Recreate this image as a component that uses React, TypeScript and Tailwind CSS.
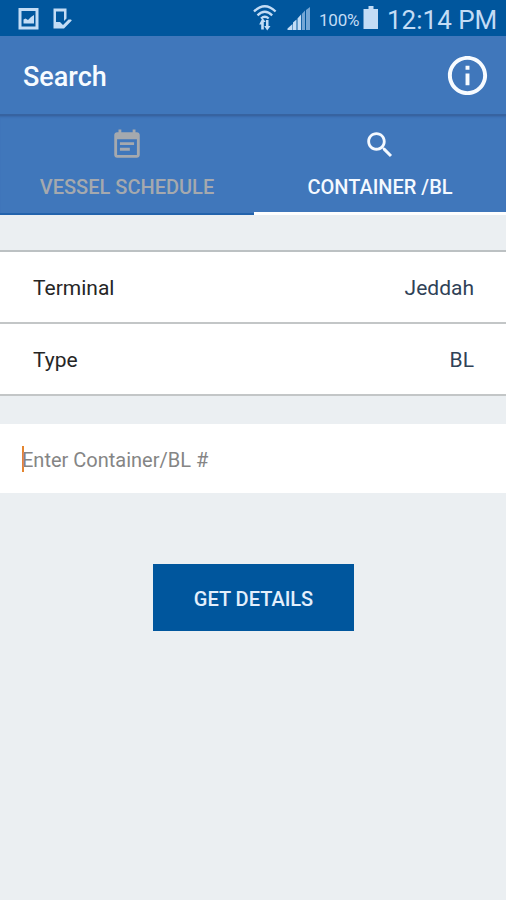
import type { ReactNode } from "react";

function StatusBar() {
  return (
    <div className="flex h-9 shrink-0 bg-[#00569d] text-[#c3dcf5]">
      <svg className="h-9 w-20" viewBox="0 0 80 36" fill="currentColor">
        <path fillRule="evenodd" d="M18.5 8h20v21.500h-20zM21.500 11v15.500h14V11zM23.500 23.500v-4l2-1 2.500 1.500 3-3 3-2v8.500z" />
        <path fillRule="evenodd" d="M53.500 8.500h13v10l-2.500 2.500v-9.500h-8V22h4l3 3 5.500-5.500 2.500 0 .8 1-7.800 8H53.500z" />
      </svg>
      <div className="grow" />
      <svg className="h-9 w-16" viewBox="0 0 64 36" fill="none">
        <g stroke="currentColor" strokeWidth="2.300">
          <path d="M5 11.500Q15.800 1 26.600 11.500" />
          <path d="M8.500 15.300Q15.800 8.300 23.200 15.300" />
          <path d="M12 18.500Q15.800 15 19.700 18.500" />
        </g>
        <path fill="currentColor" d="M13.500 18l3.200 4h-1.900v7.500h-2.600v-5h-2zM18.200 30.500l-3-4.500h1.800v-6h2.500v6h2z" />
        <path fill="currentColor" d="M38.500 28.500l5-4.500v6h-5zM44 22.500l3.500-3V30H44zM48.500 18.500l3.500-4V30h-3.500z" />
        <path fill="#74a6d5" d="M52.800 14l3.200-3.500V30h-3.200zM57 10l4-3v23h-4z" />
      </svg>
      <span className="ml-1.5 mt-2 w-10 whitespace-nowrap text-[17px] leading-6 tracking-[-0.2px]">100%</span>
      <svg className="ml-1 mt-1.5 h-6 w-4" viewBox="0 0 16 24" fill="currentColor">
        <path d="M5.500 0h5v3H15v20H.5V3h5z" />
      </svg>
      <span className="ml-2 mr-3.5 w-[105px] whitespace-nowrap text-[26px] leading-10">12:14 PM</span>
    </div>
  );
}

function Tab({ label, active, path }: { label: string; active: boolean; path: string }) {
  return (
    <div
      className={
        active
          ? "flex w-[252px] flex-col items-center border-b-[3px] border-white text-[#f4f9ff]"
          : "flex w-[254px] flex-col items-center border-b-2 border-[#2363ac] text-[#a5a9ae]"
      }
    >
      <svg className="mt-3 h-[34px] w-[34px]" viewBox="0 0 24 24" fill="currentColor">
        <path d={path} />
      </svg>
      <span className="mt-[13px] whitespace-nowrap text-[20px] font-medium leading-6">{label}</span>
    </div>
  );
}

function Row({ label, children }: { label: string; children: ReactNode }) {
  return (
    <div className="flex h-[72px] items-center justify-between border-b-2 border-[#c3c6c7] bg-white pl-[33px] pr-8 pt-1 text-[21px]">
      <span className="text-[#262626]">{label}</span>
      <span className="text-[#2f4257]">{children}</span>
    </div>
  );
}

export default function App() {
  return (
    <div className="flex h-[900px] w-[506px] flex-col overflow-hidden bg-[#ebeff2] font-['Roboto',sans-serif]">
      <StatusBar />
      <header className="flex h-20 shrink-0 items-center justify-between border-b-2 border-[#3763a0] bg-[#4077bb] pl-[23px] pr-[15px] text-[#f7fbff]">
        <h1 className="mt-1 text-[27px] font-medium">Search</h1>
        <svg className="h-[47px] w-[47px]" viewBox="0 0 24 24" fill="currentColor">
          <path d="M11 7h2v2h-2zm0 4h2v6h-2zm1-9C6.480 2 2 6.480 2 12s4.480 10 10 10 10-4.480 10-10S17.520 2 12 2zm0 18c-4.410 0-8-3.590-8-8s3.590-8 8-8 8 3.590 8 8-3.590 8-8 8z" />
        </svg>
      </header>
      <nav className="flex h-[99px] shrink-0 bg-[#4077bb] shadow-[inset_0_2px_2px_-1px_#3868a8]">
        <Tab
          label="VESSEL SCHEDULE"
          active={false}
          path="M17 10H7v2h10v-2zm2-7h-1V1h-2v2H8V1H6v2H5c-1.110 0-1.990.9-1.990 2L3 19c0 1.100.89 2 2 2h14c1.100 0 2-.9 2-2V5c0-1.100-.9-2-2-2zm0 16H5V8h14v11zm-5-5H7v2h7v-2z"
        />
        <Tab
          label="CONTAINER /BL"
          active
          path="M15.500 14h-.79l-.28-.27C15.410 12.590 16 11.110 16 9.500 16 5.910 13.090 3 9.500 3S3 5.910 3 9.500 5.910 16 9.500 16c1.610 0 3.090-.59 4.230-1.570l.27.28v.79l5 4.990L20.490 19l-4.990-5zm-6 0C7.010 14 5 11.990 5 9.500S7.010 5 9.500 5 14 7.010 14 9.500 11.990 14 9.500 14z"
        />
      </nav>
      <section className="mt-[35px] shrink-0 border-t-2 border-[#bcc1c3]">
        <Row label="Terminal">Jeddah</Row>
        <Row label="Type">BL</Row>
      </section>
      <div className="mt-7 flex h-[69px] shrink-0 items-center bg-white pl-[22px]">
        <div className="h-[26px] w-0.5 bg-[#e4852f]" />
        <span className="-ml-0.5 mt-0.5 text-[20px] text-[#858585]">Enter Container/BL #</span>
      </div>
      <button className="ml-[153px] mt-[71px] h-[67px] w-[201px] shrink-0 bg-[#00569d] pt-0.5 text-[20px] font-medium text-[#e3effc]">
        GET DETAILS
      </button>
    </div>
  );
}
